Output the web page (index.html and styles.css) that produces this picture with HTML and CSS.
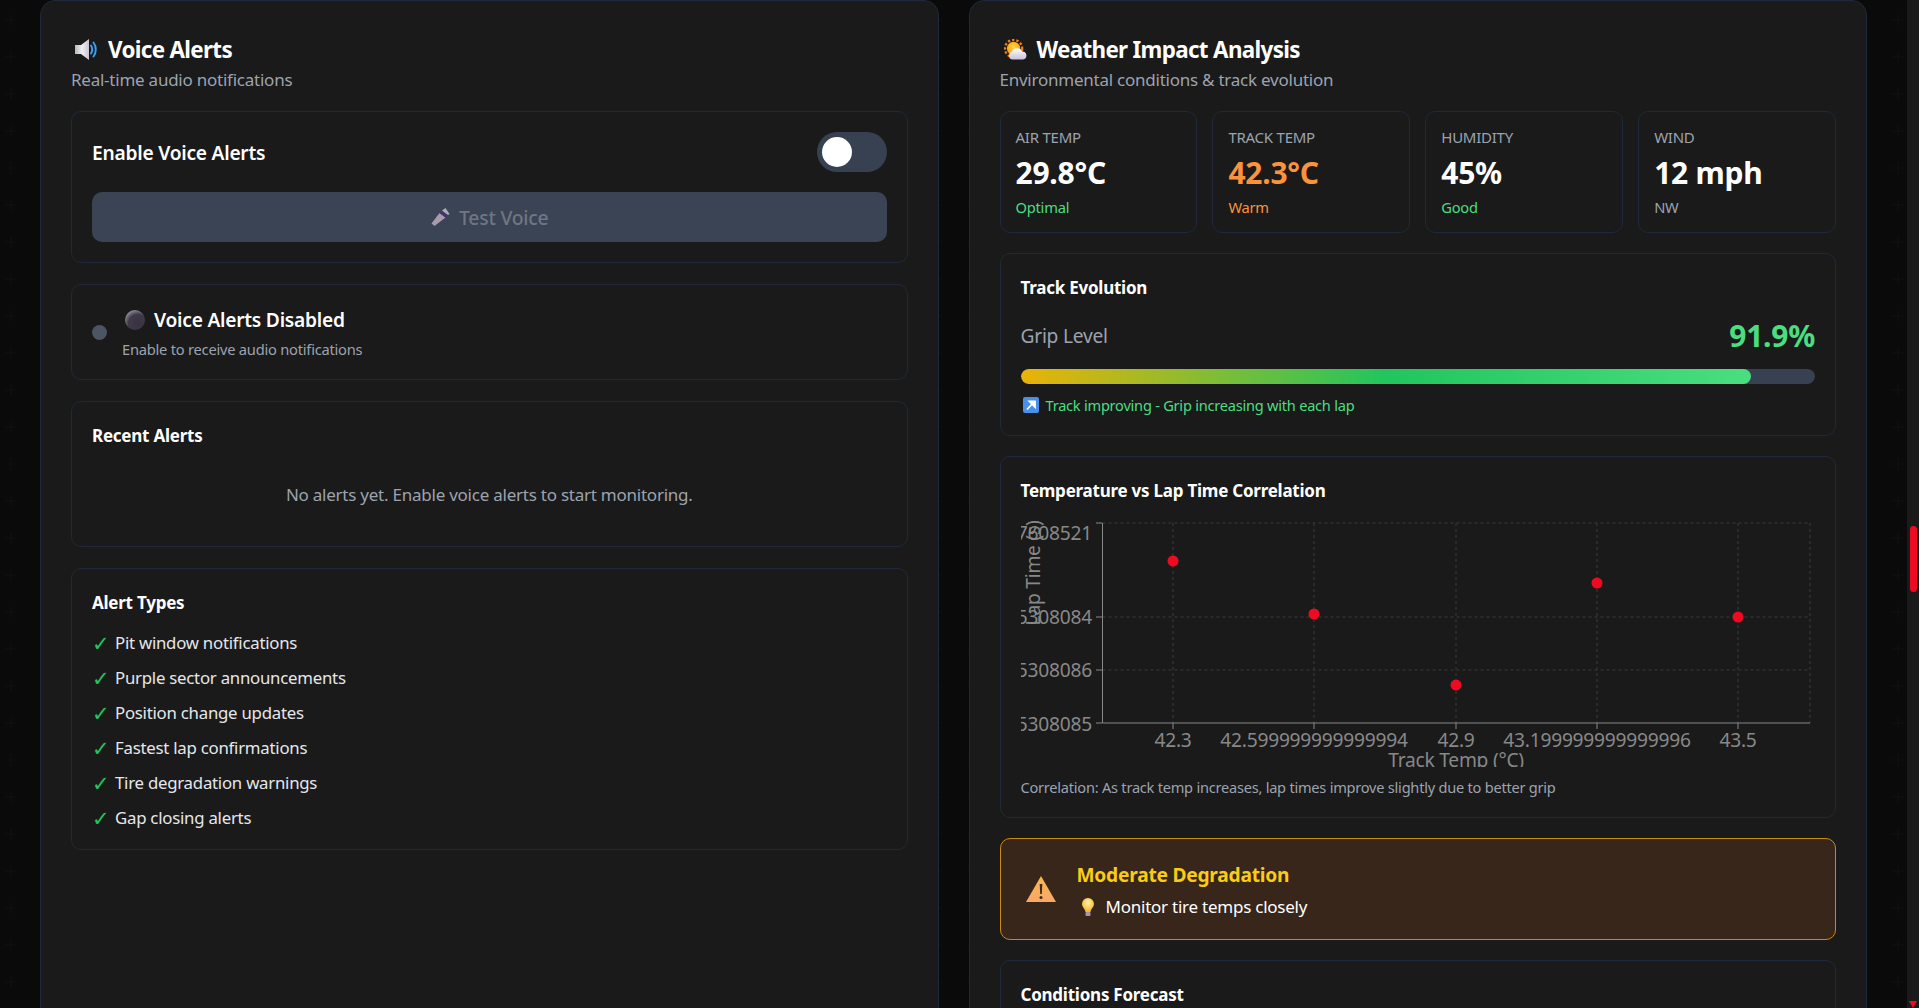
FILE: index.html
```html
<!DOCTYPE html>
<html lang="en">
<head>
    <meta charset="UTF-8">
    <meta name="viewport" content="width=device-width, initial-scale=1.0">
    <title>Voice Alerts and Weather Impact</title>
    <link rel="stylesheet" href="styles.css">
</head>
<body>
    <div class="page">
        <main class="panels">
            <!-- Voice alerts -->
            <section class="panel panel-voice">
                <h2 class="panel-title">
                    <svg class="panel-icon" viewBox="0 0 23 21">
                        <defs>
                            <linearGradient id="cone" x1="0" x2="1" y1="0" y2="0">
                                <stop offset="0" stop-color="#b9b6bf"/>
                                <stop offset="0.5" stop-color="#f1eff3"/>
                                <stop offset="1" stop-color="#c9c5cf"/>
                            </linearGradient>
                        </defs>
                        <path d="M0 6h6l8-6v21l-8-6H0z" fill="url(#cone)"/>
                        <path d="M16 6.500c1.500 2.500 1.500 5.500 0 8M18.500 3.500c3 4 3 10 0 14" fill="none" stroke="#3b9cf0" stroke-width="2" stroke-linecap="round"/>
                    </svg>
                    Voice Alerts
                </h2>
                <p class="panel-subtitle">Real-time audio notifications</p>

                <div class="card">
                    <div class="toggle-row">
                        <span class="toggle-label">Enable Voice Alerts</span>
                        <span class="toggle"><span class="toggle-knob"></span></span>
                    </div>
                    <button class="test-btn">
                        <svg class="mic-icon" viewBox="0 0 18 18">
                            <path d="M0 15.500L8 5l6 4.500L3 18z" fill="#cdb9c9"/>
                            <path d="M8 5l2-2.500 6 4.500-2 2.500z" fill="#4e2a7a"/>
                            <path d="M10.500 2.500L14 0l4 6-1.500 1z" fill="#d8cfd8"/>
                        </svg>
                        Test Voice
                    </button>
                </div>

                <div class="card status-card">
                    <span class="status-dot"></span>
                    <div>
                        <div class="status-title">
                            <svg class="ball-icon" viewBox="0 0 20 20">
                                <defs>
                                    <radialGradient id="ball" cx="0.65" cy="0.7" r="0.8">
                                        <stop offset="0" stop-color="#3a3145"/>
                                        <stop offset="0.6" stop-color="#3f3a48"/>
                                        <stop offset="1" stop-color="#a49fa8"/>
                                    </radialGradient>
                                </defs>
                                <circle cx="10" cy="10" r="10" fill="url(#ball)"/>
                            </svg>
                            Voice Alerts Disabled
                        </div>
                        <div class="status-sub">Enable to receive audio notifications</div>
                    </div>
                </div>

                <div class="card">
                    <h3 class="card-title">Recent Alerts</h3>
                    <p class="empty-msg">No alerts yet. Enable voice alerts to start monitoring.</p>
                </div>

                <div class="card">
                    <h3 class="card-title types-title">Alert Types</h3>
                    <ul class="alert-types">
                        <li><span class="check">✓</span>Pit window notifications</li>
                        <li><span class="check">✓</span>Purple sector announcements</li>
                        <li><span class="check">✓</span>Position change updates</li>
                        <li><span class="check">✓</span>Fastest lap confirmations</li>
                        <li><span class="check">✓</span>Tire degradation warnings</li>
                        <li><span class="check">✓</span>Gap closing alerts</li>
                    </ul>
                </div>
            </section>

            <!-- Weather impact -->
            <section class="panel">
                <h2 class="panel-title">
                    <svg class="panel-icon" viewBox="0 0 24 21">
                        <defs>
                            <radialGradient id="sun" cx="0.5" cy="0.4" r="0.6">
                                <stop offset="0" stop-color="#fdd835"/>
                                <stop offset="1" stop-color="#f79a1e"/>
                            </radialGradient>
                            <linearGradient id="cloud" x1="0" x2="0" y1="0" y2="1">
                                <stop offset="0" stop-color="#ffffff"/>
                                <stop offset="1" stop-color="#c9c0dc"/>
                            </linearGradient>
                        </defs>
                        <circle cx="10" cy="9.500" r="7" fill="url(#sun)"/>
                        <circle cx="10" cy="9.500" r="9" fill="none" stroke="#ef7f1a" stroke-width="2.400" stroke-dasharray="2.500 2"/>
                        <path d="M9 21a4 4 0 0 1-1-7.800A6 6 0 0 1 19 12.500a4.300 4.300 0 0 1 1 8.500z" fill="url(#cloud)"/>
                    </svg>
                    Weather Impact Analysis
                </h2>
                <p class="panel-subtitle">Environmental conditions &amp; track evolution</p>

                <div class="stat-grid">
                    <div class="card stat-card">
                        <div class="stat-label">AIR TEMP</div>
                        <div class="stat-value">29.8°C</div>
                        <div class="stat-note good">Optimal</div>
                    </div>
                    <div class="card stat-card">
                        <div class="stat-label">TRACK TEMP</div>
                        <div class="stat-value warm">42.3°C</div>
                        <div class="stat-note warm">Warm</div>
                    </div>
                    <div class="card stat-card">
                        <div class="stat-label">HUMIDITY</div>
                        <div class="stat-value">45%</div>
                        <div class="stat-note good">Good</div>
                    </div>
                    <div class="card stat-card">
                        <div class="stat-label">WIND</div>
                        <div class="stat-value">12 mph</div>
                        <div class="stat-note">NW</div>
                    </div>
                </div>

                <div class="card">
                    <h3 class="card-title">Track Evolution</h3>
                    <div class="grip-row">
                        <span class="grip-label">Grip Level</span>
                        <span class="grip-value">91.9%</span>
                    </div>
                    <div class="grip-bar"><div class="grip-fill" style="width: 91.9%"></div></div>
                    <div class="grip-note">
                        <svg class="arrow-icon" viewBox="0 0 16 16">
                            <rect width="16" height="16" rx="2" fill="#4a90e8"/>
                            <path d="M4 12.500L10.500 5.500M6.500 4.500h5.500v5.500z" fill="#fff" stroke="#fff" stroke-width="1.800"/>
                        </svg>
                        Track improving - Grip increasing with each lap
                    </div>
                </div>

                <div class="card">
                    <h3 class="card-title chart-title">Temperature vs Lap Time Correlation</h3>
                    <svg class="chart" viewBox="0 0 794 250">
                        <g class="grid-lines">
                            <path d="M81.500 6H789M81.500 100H789M81.500 153H789"/>
                            <path d="M152 6V206M293 6V206M435 6V206M576 6V206M717 6V206M789 6V206"/>
                        </g>
                        <g class="axis-lines">
                            <path d="M81.500 6V206H789"/>
                            <path d="M75 6H81M75 100H81M75 153H81M75 206H81"/>
                            <path d="M152 206V212M293 206V212M435 206V212M576 206V212M717 206V212"/>
                        </g>
                        <text class="axis-title" transform="translate(19 56) rotate(-90)">Lap Time (s)</text>
                        <g class="y-ticks">
                            <text x="71" y="23">67608521</text>
                            <text x="71" y="107">65308084</text>
                            <text x="71" y="160">65308086</text>
                            <text x="71" y="214">65308085</text>
                        </g>
                        <g class="x-ticks">
                            <text x="152" y="230">42.3</text>
                            <text x="293" y="230">42.599999999999994</text>
                            <text x="435" y="230">42.9</text>
                            <text x="576" y="230">43.199999999999996</text>
                            <text x="717" y="230">43.5</text>
                            <text x="435" y="250">Track Temp (°C)</text>
                        </g>
                        <g class="dots">
                            <circle cx="152" cy="44" r="5.500"/>
                            <circle cx="293" cy="97" r="5.500"/>
                            <circle cx="435" cy="168" r="5.500"/>
                            <circle cx="576" cy="66" r="5.500"/>
                            <circle cx="717" cy="100" r="5.500"/>
                        </g>
                    </svg>
                    <p class="chart-note">Correlation: As track temp increases, lap times improve slightly due to better grip</p>
                </div>

                <div class="warning">
                    <svg class="warning-icon" viewBox="0 0 30 26">
                        <defs>
                            <linearGradient id="warn" x1="0" x2="0" y1="0" y2="1">
                                <stop offset="0" stop-color="#f7b94a"/>
                                <stop offset="1" stop-color="#fba66a"/>
                            </linearGradient>
                        </defs>
                        <path d="M15 0l15 26H0z" fill="url(#warn)"/>
                        <path d="M13.700 8h2.600l-.5 10h-1.600z" fill="#3a2a1a"/>
                        <circle cx="15" cy="21.500" r="1.500" fill="#3a2a1a"/>
                    </svg>
                    <div>
                        <div class="warning-title">Moderate Degradation</div>
                        <div class="warning-text">
                            <svg class="bulb-icon" viewBox="0 0 14 18">
                                <defs>
                                    <radialGradient id="bulb" cx="0.5" cy="0.35" r="0.6">
                                        <stop offset="0" stop-color="#fff4a8"/>
                                        <stop offset="1" stop-color="#f6b62c"/>
                                    </radialGradient>
                                </defs>
                                <path d="M7 0a6 6 0 0 1 6 6c0 3-3 4.500-3.500 8h-5C4 10.500 1 9 1 6a6 6 0 0 1 6-6z" fill="url(#bulb)"/>
                                <rect x="4.500" y="14" width="5" height="4" rx="1" fill="#a994b8"/>
                            </svg>
                            Monitor tire temps closely
                        </div>
                    </div>
                </div>

                <div class="card forecast-card">
                    <h3 class="card-title">Conditions Forecast</h3>
                </div>
            </section>
        </main>

        <div class="scrollbar">
            <div class="scroll-thumb"></div>
            <div class="scroll-arrow"></div>
        </div>
    </div>
</body>
</html>
```

FILE: styles.css
```css
* {
    box-sizing: border-box;
}
html, body {
    margin: 0;
    height: 100%;
    overflow: hidden;
}
body {
    font-family: "Noto Sans", "Open Sans", Arial, sans-serif;
    color: #fff;
    letter-spacing: -0.015em;
    background-color: #0a0a0a;
    background-image: url("data:image/svg+xml,%3Csvg xmlns='http://www.w3.org/2000/svg' width='37' height='37'%3E%3Cpath d='M5 20h12M11 14v12' stroke='%23101010' stroke-width='1'/%3E%3C/svg%3E");
}
h2, h3, p, ul {
    margin: 0;
    padding: 0;
}
.page {
    display: flex;
    height: 1008px;
}
.panels {
    flex: 1;
    display: grid;
    grid-template-columns: 1fr 1fr;
    gap: 30px;
    padding: 0 40px;
    overflow: hidden;
    height: 1008px;
}
.panel {
    background-color: #1a1a1a;
    border: 1px solid #1e293b;
    border-radius: 15px;
    padding: 30px;
    height: 1100px;
}
.panel-title {
    display: flex;
    align-items: center;
    font-size: 22.400px;
    font-weight: 700;
    letter-spacing: -0.03em;
    line-height: 37px;
}
.panel-icon {
    width: 23px;
    height: 21px;
    margin: 0 10px 0 4px;
}
.panel-subtitle {
    font-size: 17px;
    line-height: 24px;
    color: #9ca3af;
    margin-bottom: 19px;
}

/* cards */
.card {
    background-color: #1a1a1a;
    border: 1px solid #1e293b;
    border-radius: 10px;
    padding: 20px;
    margin-bottom: 20px;
}
.panel-voice .card {
    margin-bottom: 21px;
}
.card-title {
    font-size: 17px;
    font-weight: 700;
    line-height: 27px;
}
.toggle-row {
    display: flex;
    justify-content: space-between;
    align-items: center;
    margin-bottom: 20px;
}
.toggle-label {
    font-size: 19.200px;
    font-weight: 600;
}
.toggle {
    display: flex;
    align-items: center;
    width: 70px;
    height: 40px;
    padding: 5px;
    background-color: #374151;
    border-radius: 20px;
}
.toggle-knob {
    width: 30px;
    height: 30px;
    background-color: #fff;
    border-radius: 50%;
}
.test-btn {
    display: flex;
    justify-content: center;
    align-items: center;
    width: 100%;
    height: 50px;
    border: none;
    border-radius: 10px;
    background-color: #3a4454;
    color: #6f7683;
    font-family: inherit;
    font-size: 19.400px;
    letter-spacing: inherit;
    font-weight: 500;
}
.mic-icon {
    width: 21px;
    height: 18px;
    margin-right: 8px;
    opacity: 0.75;
}
.status-card {
    display: flex;
    align-items: center;
    gap: 15px;
    height: 96px;
    padding-top: 0;
    padding-bottom: 0;
}
.status-dot {
    width: 15px;
    height: 15px;
    border-radius: 50%;
    background-color: #4b5563;
}
.status-title {
    display: flex;
    align-items: center;
    font-size: 19.200px;
    font-weight: 600;
    line-height: 30px;
}
.ball-icon {
    width: 20px;
    height: 20px;
    margin: 0 9px 0 3px;
}
.status-sub {
    font-size: 14.700px;
    line-height: 22px;
    margin-top: 3px;
    color: #9ca3af;
}
.empty-msg {
    font-size: 17px;
    line-height: 26px;
    text-align: center;
    color: #9ca3af;
    padding: 20px 0 18px;
    margin-top: 13px;
}
.types-title {
    margin-bottom: 16px;
}
.alert-types {
    list-style: none;
}
.alert-types li {
    display: flex;
    font-size: 16.800px;
    line-height: 22px;
    margin-bottom: 13px;
    color: #e5e7eb;
}
.alert-types li:last-child {
    margin-bottom: 0;
}
.check {
    width: 23px;
    font-size: 21px;
    color: #22c55e;
}

/* weather stats */
.stat-grid {
    display: grid;
    grid-template-columns: repeat(4, 1fr);
    gap: 15px;
    margin-bottom: 20px;
}
.stat-card {
    height: 122px;
    padding: 14px 15px;
    margin-bottom: 0;
}
.stat-label {
    font-size: 15px;
    line-height: 22px;
    color: #9ca3af;
}
.stat-value {
    font-size: 30px;
    font-weight: 700;
    line-height: 40px;
    margin-top: 5px;
}
.stat-note {
    font-size: 14.700px;
    line-height: 22px;
    margin-top: 3px;
    color: #9ca3af;
}
.good {
    color: #4ade80;
}
.warm {
    color: #fb923c;
}
.grip-row {
    display: flex;
    justify-content: space-between;
    align-items: center;
    margin-top: 16px;
    height: 36px;
}
.grip-label {
    font-size: 19.200px;
    color: #9ca3af;
}
.grip-value {
    font-size: 30px;
    font-weight: 700;
    color: #4ade80;
}
.grip-bar {
    height: 15px;
    margin-top: 16px;
    background-color: #374151;
    border-radius: 8px;
    overflow: hidden;
}
.grip-fill {
    height: 100%;
    border-radius: 8px;
    background: linear-gradient(90deg, #eab308, #22c55e 50%, #4ade80);
}
.grip-note {
    display: flex;
    align-items: center;
    font-size: 14.600px;
    line-height: 18px;
    margin-top: 12px;
    padding-bottom: 1px;
    color: #4ade80;
}
.arrow-icon {
    width: 16px;
    height: 16px;
    margin: 0 7px 0 2px;
}

/* chart */
.chart-title {
    margin-bottom: 13px;
}
.chart {
    display: block;
    width: 794px;
    height: 250px;
    overflow: hidden;
    font-size: 19.200px;
}
.grid-lines path {
    fill: none;
    stroke: #3a3a3a;
    stroke-width: 1;
    stroke-dasharray: 3 3;
}
.axis-lines path {
    fill: none;
    stroke: #888;
    stroke-width: 1;
}
.chart text {
    fill: #888;
}
.y-ticks text {
    text-anchor: end;
}
.x-ticks text {
    text-anchor: middle;
}
.axis-title {
    text-anchor: middle;
}
.dots circle {
    fill: #ee0a20;
}
.chart-note {
    font-size: 14.600px;
    line-height: 20px;
    margin-top: 10px;
    color: #9ca3af;
}

/* warning */
.warning {
    display: flex;
    align-items: center;
    height: 102px;
    padding: 0 25px;
    margin-bottom: 20px;
    background-color: #38261a;
    border: 1px solid #c58a10;
    border-radius: 10px;
}
.warning-icon {
    width: 30px;
    height: 26px;
    margin-right: 21px;
}
.warning-title {
    font-size: 19.200px;
    font-weight: 700;
    line-height: 30px;
    margin-top: 3px;
    color: #facc15;
}
.warning-text {
    display: flex;
    align-items: center;
    font-size: 17px;
    line-height: 30px;
    margin-top: 2px;
}
.bulb-icon {
    width: 14px;
    height: 18px;
    margin: 0 11px 0 4px;
}
.forecast-card {
    height: 200px;
}

/* custom scrollbar */
.scrollbar {
    flex: none;
    position: relative;
    width: 12px;
    background-color: #1a1a1a;
}
.scroll-thumb {
    width: 7px;
    height: 66px;
    margin: 526px 0 0 3px;
    background-color: #ee0a20;
    border-radius: 4px;
}
.scroll-arrow {
    position: absolute;
    left: 2px;
    bottom: 0;
    border-left: 4px solid transparent;
    border-right: 4px solid transparent;
    border-top: 7px solid #ee0a20;
}
```
